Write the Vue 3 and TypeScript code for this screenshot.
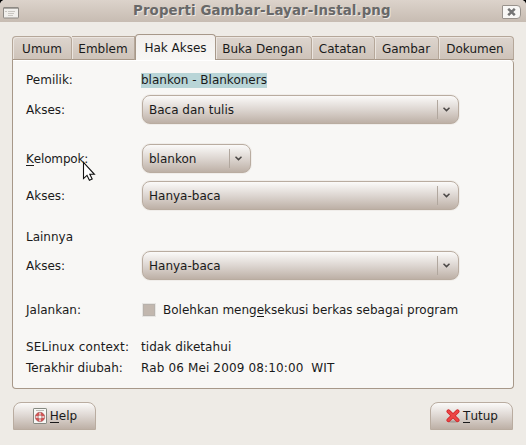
<script setup lang="ts">
interface Tab { label: string; kind: string }
const tabs: Tab[] = [
  { label: 'Umum', kind: 'umum' },
  { label: 'Emblem', kind: 'emblem' },
  { label: 'Hak Akses', kind: 'active' },
  { label: 'Buka Dengan', kind: 'buka' },
  { label: 'Catatan', kind: 'catatan' },
  { label: 'Gambar', kind: 'gambar' },
  { label: 'Dokumen', kind: 'dokumen' },
]
const modified = 'Rab 06 Mei 2009 08:10:00  WIT'
</script>

<template>
  <div class="window">
    <header class="titlebar">
      <svg class="app-icon" width="16" height="12" viewBox="0 0 16 12">
        <rect x=".5" y=".5" width="15" height="10.5" rx=".5" fill="#f1efec" stroke="#8d8984" />
        <path d="M1 1.5h14" stroke="#aaa7a2" />
        <path d="M2 4.5h2M5 4.5h7M5 6.5h6M5 8.5h5" stroke="#c9c6c1" />
      </svg>
      <h1>Properti Gambar-Layar-Instal.png</h1>
      <button class="close" aria-label="Tutup">
        <svg width="9" height="8" viewBox="0 0 9 8"><path d="M1.2 .8L7.8 7.2M7.8 .8L1.2 7.2" stroke="#747474" stroke-width="2.5" /></svg>
      </button>
    </header>

    <nav class="tabs">
      <div v-for="tab in tabs" :key="tab.label" class="tab" :class="tab.kind">{{ tab.label }}</div>
    </nav>

    <main class="panel">
      <div class="row r-owner"><span class="label">Pemilik:</span><span class="selected">blankon - Blankoners</span></div>
      <div class="row r-access1"><span class="label">Akses:</span>
        <div class="combo"><span>Baca dan tulis</span><i class="sep"></i><svg class="arrow" width="7" height="5" viewBox="0 0 7 5"><path d="M.5 .8L3.5 3.6L6.5 .8" /></svg></div>
      </div>
      <div class="row r-group"><span class="label tight"><u>K</u>elompok:</span>
        <div class="combo small"><span>blankon</span><i class="sep"></i><svg class="arrow" width="7" height="5" viewBox="0 0 7 5"><path d="M.5 .8L3.5 3.6L6.5 .8" /></svg></div>
      </div>
      <div class="row r-access2"><span class="label">Akses:</span>
        <div class="combo"><span>Hanya-baca</span><i class="sep"></i><svg class="arrow" width="7" height="5" viewBox="0 0 7 5"><path d="M.5 .8L3.5 3.6L6.5 .8" /></svg></div>
      </div>
      <div class="row r-other"><span class="label">Lainnya</span></div>
      <div class="row r-access3"><span class="label">Akses:</span>
        <div class="combo"><span>Hanya-baca</span><i class="sep"></i><svg class="arrow" width="7" height="5" viewBox="0 0 7 5"><path d="M.5 .8L3.5 3.6L6.5 .8" /></svg></div>
      </div>
      <div class="row r-run"><span class="label">Jalankan:</span><i class="check"></i><span>Bolehkan meng<u>e</u>ksekusi berkas sebagai program</span></div>
      <div class="row r-se"><span class="label wide">SELinux context:</span><span class="se-value">tidak diketahui</span></div>
      <div class="row r-date"><span class="label">Terakhir diubah:</span><span class="date">{{ modified }}</span></div>
    </main>

    <footer class="actions">
      <button class="action">
        <svg width="14" height="16" viewBox="0 0 14 16">
          <rect x=".5" y=".5" width="13" height="15" rx=".6" fill="#f8f8f6" stroke="#858981" />
          <path d="M3 2.5h8" stroke="#b9bbb7" />
          <circle cx="7" cy="9" r="3.4" fill="none" stroke="#d65353" stroke-width="2.6" />
          <path d="M7 4v3M7 11v3M2 9h3M9 9h3" stroke="#f4eeee" stroke-width="1.3" />
          <circle cx="7" cy="9" r="4.7" fill="none" stroke="#924b4b" stroke-width=".6" />
          <circle cx="7" cy="9" r="2" fill="none" stroke="#924b4b" stroke-width=".6" />
        </svg>
        <span><u>H</u>elp</span>
      </button>
      <button class="action">
        <svg width="14" height="14" viewBox="0 0 14 14">
          <ellipse cx="7" cy="12.6" rx="5" ry="1.2" fill="#a99f99" />
          <path d="M2.5 2.3L11.5 11.2M11.5 2.3L2.5 11.2" stroke="#cf2226" stroke-width="4" stroke-linecap="round" />
          <path d="M2.5 2.3L11.5 11.2M11.5 2.3L2.5 11.2" stroke="#ed4545" stroke-width="2.5" stroke-linecap="round" />
        </svg>
        <span><u>T</u>utup</span>
      </button>
    </footer>

    <svg class="cursor" width="14" height="21" viewBox="0 0 14 21">
      <path d="M1.5 1.5V17.6L5 14.3L7.4 19.3L10.2 18L7.8 13.3H12.4Z" fill="#fff" stroke="#111" stroke-width="1.1" />
    </svg>
  </div>
</template>

<style>
body { margin: 0; background: #000; }
</style>
<style scoped>
* { box-sizing: border-box; }
.window { position: relative; width: 526px; height: 445px; overflow: hidden; background: #eeebe6; border-radius: 5px 5px 0 0; font: 12px/16px "DejaVu Sans", sans-serif; color: #1a1a1a; }
.titlebar { display: flex; align-items: flex-start; height: 22px; padding: 5px 5px 0 3px; background: linear-gradient(#dcd3cb, #c7bcb2); }
.app-icon { margin-top: 2px; flex: none; }
h1 { flex: 1; margin: -4px 0 0 114px; font-size: 13.33px; line-height: 19px; letter-spacing: .13px; font-weight: bold; color: #686868; text-shadow: 1px 1px #eee8e2; white-space: nowrap; }
.close { display: flex; align-items: center; justify-content: center; width: 19px; height: 14px; padding: 0; border: 1px solid #98928c; border-radius: 1px 4px 4px 1px; background: #f8f7f5; }
.tabs { display: flex; align-items: flex-end; height: 38px; padding-left: 12px; }
.tab { height: 24px; border: 1px solid #b5a799; border-left-width: 0; border-bottom-color: #a79889; border-radius: 0 4px 0 0; background: linear-gradient(#ddd5ce, #cec3b9); box-shadow: inset 1px 1px #ebe5df; text-align: center; line-height: 24px; white-space: nowrap; }
.umum { width: 60px; border-left-width: 1px; border-radius: 4px 4px 0 0; }
.emblem { width: 63px; border-radius: 0; }
.active { position: relative; width: 81px; height: 26px; border-left-width: 1px; border-bottom: 0; border-radius: 4px 4px 0 0; background: linear-gradient(#f2efec, #f8f7f5); box-shadow: none; border-color: #a79889; line-height: 26px; }
.buka { width: 96px; padding-right: 2px; }
.catatan { width: 63px; padding-right: 1px; }
.gambar { width: 64px; padding-right: 1px; }
.dokumen { width: 75px; padding-right: 2px; }
.panel { width: 502px; height: 329px; margin-left: 12px; padding: 12px 0 0 13px; border: 1px solid #a79889; border-top: 0; border-radius: 0 4px 4px 4px; background: #f8f7f5; box-shadow: inset 0 1px #fff; }
.row { display: flex; align-items: center; height: 16px; white-space: nowrap; }
.label { width: 115px; flex: none; }
.tight { letter-spacing: -.15px; }
.wide { letter-spacing: .16px; }
.selected { background: #b9d5d7; height: 15px; line-height: 15px; }
.r-access1 { height: 31px; margin-top: 6px; }
.r-group { height: 31px; margin-top: 18px; }
.r-access2 { height: 31px; margin-top: 6px; }
.r-other { margin-top: 18px; }
.r-access3 { height: 31px; margin-top: 5px; }
.r-run { margin-top: 21px; }
.r-se { margin-top: 21px; }
.r-date { margin-top: 5px; }
.combo { display: flex; align-items: center; width: 317px; height: 29px; margin-left: 1px; padding: 0 8px 0 6px; border: 1px solid #b9aca0; border-radius: 8px; background: linear-gradient(#fbfaf9 0%, #ddd6d1 50%, #bdb0a6 100%); box-shadow: 0 0 0 1px #f0edea; }
.combo.small { width: 109px; }
.sep { width: 1px; height: 19px; margin-left: auto; background: #b1a79e; }
.arrow { margin-left: 5px; fill: none; stroke: #4b4846; stroke-width: 1.5; }
.check { width: 12px; height: 12px; margin: 0 8px 0 2px; border: 1px solid #b8b2ac; background: #c2b7ae; box-shadow: 0 0 0 1px #e7e5e2; }
.se-value { letter-spacing: .07px; }
.date { white-space: pre; letter-spacing: .14px; }
u { text-decoration: none; background: linear-gradient(currentColor, currentColor) 0 100% / 100% 1px no-repeat; display: inline-block; line-height: 13px; }
.actions { display: flex; justify-content: space-between; padding: 13px 13px 0; }
.action { display: flex; align-items: center; justify-content: center; gap: 3px; width: 83px; height: 28px; padding: 0 0 0 1px; border: 1px solid #b9aca0; border-radius: 8px 8px 0 0; background: linear-gradient(#fbfaf9, #ddd6d1 50%, #bdb0a6); font: inherit; color: inherit; }
.cursor { position: absolute; left: 82px; top: 161px; }
</style>
